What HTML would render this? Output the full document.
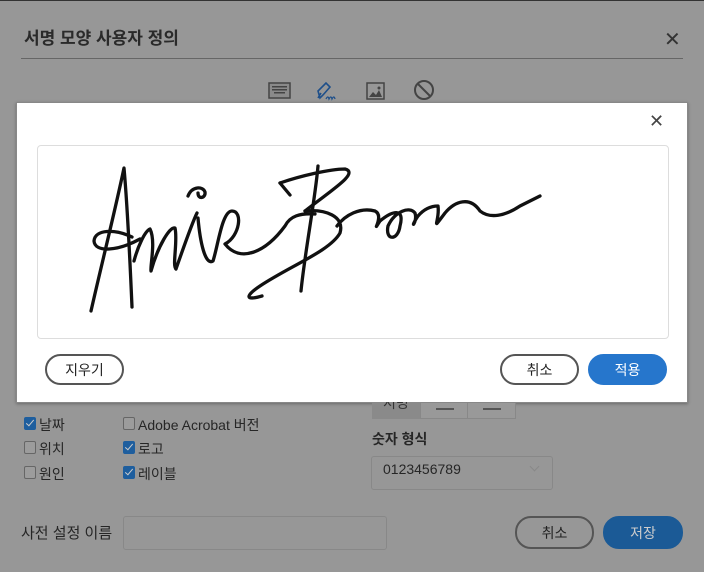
<!DOCTYPE html>
<html><head><meta charset="utf-8"><style>
*{box-sizing:border-box;margin:0;padding:0}
body{width:704px;height:572px;overflow:hidden;background:#979797;font-family:"Liberation Sans","Noto Sans CJK KR",sans-serif;position:relative;border-top:1px solid #333}
.a{position:absolute}
.t{color:#262626;font-size:14px}
.cb{position:absolute;width:12px;height:13px;border:1px solid #666;border-radius:2px;background:#9c9c9c}
.cb.on{background:#1e5e9e;border-color:#1e5e9e}
.cb.on:after{content:"";position:absolute;left:3px;top:0px;width:3px;height:7px;border:solid #ccc;border-width:0 1.5px 1.5px 0;transform:rotate(40deg)}
.btn{position:absolute;height:31px;border:2px solid #555;border-radius:16px;font-size:14px;display:flex;align-items:center;justify-content:center;color:#222}
</style></head><body>
<div class="a" style="left:24px;top:23px;font-size:17px;font-weight:bold;color:#2a2a2a">서명 모양 사용자 정의</div>
<div class="a" style="left:664px;top:26px;font-size:20px;color:#333">✕</div>
<div class="a" style="left:21px;top:57px;width:662px;height:1px;background:#666"></div>
<svg class="a" style="left:268px;top:78px" width="170" height="24">
<rect x="1" y="4" width="21" height="15" fill="#8a8a8a" stroke="#444" stroke-width="1.5"/>
<g fill="#444"><rect x="4" y="7" width="15" height="1.5"/><rect x="4" y="10" width="15" height="1.5"/><rect x="6" y="13" width="11" height="1.5"/></g>
<path d="M52 19 L50 12 L58 4 L62 8 L55 16 Z M50 19 l3 -5" fill="none" stroke="#1e4f8a" stroke-width="1.6"/>
<path d="M58 20 q2 -4 3 0 q2 -4 3 0 q2 -4 3 0" fill="none" stroke="#1e4f8a" stroke-width="1.3"/>
<rect x="99" y="4" width="17" height="16" fill="none" stroke="#444" stroke-width="1.5"/>
<path d="M101 18 l4 -5 3 3 3 -5 3 7z" fill="#444"/><circle cx="111" cy="9" r="1.5" fill="#444"/>
<circle cx="156" cy="11" r="9" fill="none" stroke="#444" stroke-width="2"/><path d="M150 5 L162 17" stroke="#444" stroke-width="2"/>
</svg>
<div class="a" style="left:16px;top:101px;width:672px;height:301px;background:#fff;border:1px solid #888;box-shadow:0 1px 3px rgba(0,0,0,.3)"></div>
<div class="a" style="left:649px;top:110px;font-size:18px;color:#444">✕</div>
<div class="a" style="left:37px;top:144px;width:632px;height:194px;border:1px solid #ddd;border-radius:4px;background:#fff"></div>
<svg class="a" style="left:37px;top:144px" width="632" height="194" viewBox="37 144 632 194">
<g fill="none" stroke="#111" stroke-width="3.3" stroke-linecap="round" stroke-linejoin="round">
<path d="M91 310 C100 270 115 210 124 167 C127 200 130 260 132 306"/>
<path d="M132 236 C115 228 95 228 94 240 C95 252 118 250 140 238"/>
<path d="M134 260 C138 245 145 230 150 228 C156 240 150 265 151 270 C158 245 170 225 175 227 C178 240 172 265 176 268 C184 245 192 222 197 212"/>
<path d="M188 195 C192 185 203 185 205 191 C206 197 198 199 198 192"/>
<path d="M198 217 C200 240 205 265 213 260 C218 245 222 210 232 210 C243 210 240 235 225 243 C240 262 265 252 285 225 C290 215 300 212 315 213"/>
<path d="M280 182 C300 175 330 168 345 168 C360 172 330 190 305 210"/>
<path d="M280 182 L290 194"/>
<path d="M318 165 C315 200 305 250 301 290"/>
<path d="M305 210 C325 208 345 215 340 232 C330 250 290 265 260 285 C245 295 245 300 262 295"/>
<path d="M337 225 C345 214 360 206 375 210 C385 215 370 235 380 220 C392 210 405 206 400 225 C398 240 385 240 388 225 C395 210 410 205 415 212 C418 222 408 230 418 215 C425 207 432 205 438 205 C440 220 430 232 445 212 C455 200 470 195 480 210 C490 218 505 215 520 205 L540 195"/>
</g></svg>
<div class="btn" style="left:45px;top:353px;width:79px">지우기</div>
<div class="btn" style="left:500px;top:353px;width:79px">취소</div>
<div class="btn" style="left:588px;top:353px;width:79px;background:#2676cc;border-color:#2676cc;color:#fff">적용</div>

<div class="a" style="left:372px;top:401px;width:144px;height:17px;border:1px solid #888;background:#999;overflow:hidden"></div>
<div class="a" style="left:372px;top:401px;width:49px;height:17px;background:#8a8a8a;overflow:hidden"><div style="position:absolute;left:11px;top:-9px;font-size:14px;color:#333">서명</div></div>
<div class="a" style="left:420px;top:401px;width:1px;height:17px;background:#888"></div>
<div class="a" style="left:467px;top:401px;width:1px;height:17px;background:#888"></div>
<div class="a" style="left:436px;top:407px;width:18px;height:2px;background:#555"></div>
<div class="a" style="left:483px;top:407px;width:18px;height:2px;background:#555"></div>

<div class="cb on" style="left:24px;top:416px"></div><div class="a t" style="left:39px;top:414px">날짜</div>
<div class="cb" style="left:24px;top:440px"></div><div class="a t" style="left:39px;top:438px">위치</div>
<div class="cb" style="left:24px;top:465px"></div><div class="a t" style="left:39px;top:463px">원인</div>
<div class="cb" style="left:123px;top:416px"></div><div class="a t" style="left:138px;top:414px">Adobe Acrobat 버전</div>
<div class="cb on" style="left:123px;top:440px"></div><div class="a t" style="left:138px;top:438px">로고</div>
<div class="cb on" style="left:123px;top:465px"></div><div class="a t" style="left:138px;top:463px">레이블</div>
<div class="a t" style="left:372px;top:428px;font-weight:bold">숫자 형식</div>
<div class="a" style="left:371px;top:455px;width:182px;height:34px;border:1px solid #888;border-radius:3px"></div>
<div class="a t" style="left:383px;top:460px">0123456789</div>
<div class="a" style="left:531px;top:462px;width:7px;height:7px;border:solid #888;border-width:0 1.5px 1.5px 0;transform:rotate(45deg)"></div>
<div class="a t" style="left:21px;top:521px;font-size:15px">사전 설정 이름</div>
<div class="a" style="left:123px;top:515px;width:264px;height:34px;border:1px solid #888;border-radius:3px"></div>
<div class="btn" style="left:515px;top:515px;width:79px;height:33px">취소</div>
<div class="btn" style="left:603px;top:515px;width:80px;height:33px;background:#1b5a96;border-color:#1b5a96;color:#ccc">저장</div>
</body></html>
